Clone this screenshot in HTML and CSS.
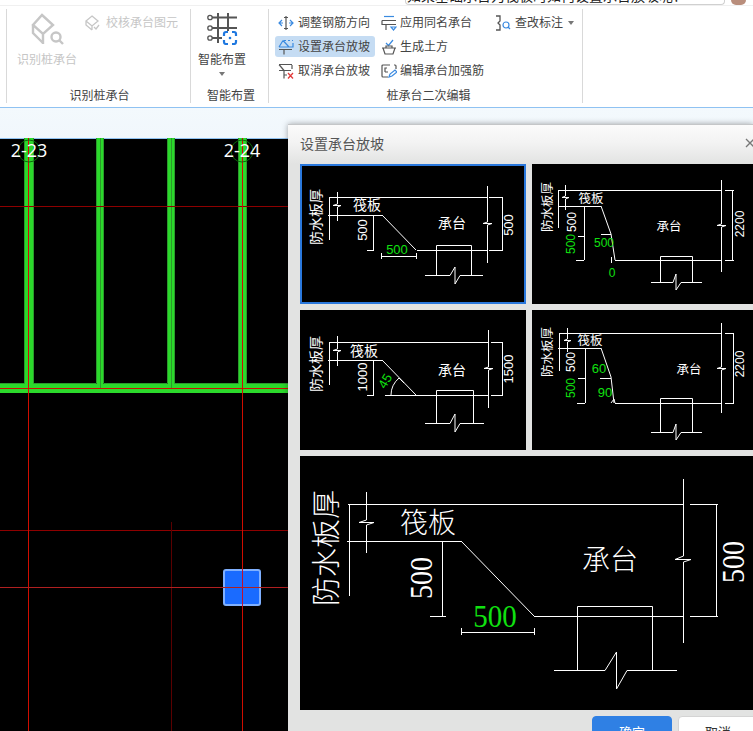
FILE: index.html
```html
<!DOCTYPE html>
<html lang="zh">
<head>
<meta charset="utf-8">
<title>设置承台放坡</title>
<link rel="stylesheet" href="styles.css">
</head>
<body>
<div class="topbar">
  <div class="search"><span class="search-text">如果基础承台为筏板时如何设置承台放坡呢？</span></div>
  <div class="avatar"></div>
</div>
<div class="ribbon">
  <section class="group g1">
    <div class="group-body">
      <div class="big disabled big-recog">
        <svg class="big-icon" viewBox="30 13 33 32"><path class="ic-dis" d="M41 15 L52 25 L42 34 L32 25 Z M32 25 V33 L42 43 M42 34 V44"/><circle class="ic-dis" cx="55" cy="37" r="4.5"/><path class="ic-dis" d="M58.5 40.5 L62 44"/></svg>
        <span>识别桩承台</span>
      </div>
      <div class="item disabled check-item">
        <svg class="icon" viewBox="0 0 16 16"><path class="ic-thin-dis" d="M7 1 L13 6 L7 11 L1 6 Z M1 6 V10 L7 15 M7 11 V15"/><path class="ic-thin-dis" d="M9 12 L11 14 L14 10"/></svg>
        <span>校核承台图元</span>
      </div>
    </div>
    <div class="group-label g1-label">识别桩承台</div>
  </section>
  <section class="group g2">
    <div class="group-body">
      <div class="big big-smart">
        <svg class="big-icon" viewBox="205 13 33 32">
          <path class="ic-dark" d="M211 17.500 H236 M211 28 H236 M211 38 H221 M217 13 V43 M227 13 V31"/>
          <circle class="ic-dark-thin" cx="209" cy="17.500" r="2.200"/><circle class="ic-dark-thin" cx="209" cy="28" r="2.200"/><circle class="ic-dark-thin" cx="209" cy="38" r="2.200"/>
          <path class="ic-blue" d="M223 36 V34 Q223 32 225 32 H227 M231 32 H233 Q235 32 235 34 V36 M235 40 V42 Q235 44 233 44 H231 M227 44 H225 Q223 44 223 42 V40"/>
          <circle class="ic-blue-dot" cx="229" cy="38" r="1.300"/>
        </svg>
        <span>智能布置</span>
        <i class="caret"></i>
      </div>
    </div>
    <div class="group-label g2-label">智能布置</div>
  </section>
  <section class="group g3">
    <div class="group-body cols">
      <div class="col col-a">
        <div class="item">
          <svg class="icon" viewBox="0 0 16 16"><path class="ic-gray" d="M8 1 V15 M6 2.500 H10 M6 13.500 H10"/><path class="ic-b" d="M4 5 L1 8 L4 11 M1 8 H5 M12 5 L15 8 L12 11 M15 8 H11"/></svg>
          <span>调整钢筋方向</span>
        </div>
        <div class="item active">
          <svg class="icon" viewBox="0 0 16 16"><path class="ic-b" d="M6 1.500 H8 M10 1.500 H12 M14 1.500 H15 M1 8 L5 1.500 M1 8 H15 V4 M5 1.500 L11 8"/><path class="ic-gray" d="M1 10.500 H14 M6 10.500 V15.500"/></svg>
          <span>设置承台放坡</span>
        </div>
        <div class="item">
          <svg class="icon" viewBox="0 0 16 16"><path class="ic-gray" d="M1 1.500 H14 M1 1.500 L6 7.500 M1 7.500 H13 M14 2 V6 M6 8 V15.500 M6 12 H9"/><path class="ic-r" d="M10 10 L15 15.500 M15 10 L10 15.500"/></svg>
          <span>取消承台放坡</span>
        </div>
      </div>
      <div class="col col-b">
        <div class="item">
          <svg class="icon" viewBox="0 0 16 16"><path class="ic-b" d="M3 1.500 H13"/><path class="ic-gray" d="M1 5.500 H15 M1 5.500 V9.500 H15 M5 9.500 V15"/><path class="ic-b" d="M10 12 H15 L12.500 15 Z"/></svg>
          <span>应用同名承台</span>
        </div>
        <div class="item">
          <svg class="icon" viewBox="0 0 16 16"><path class="ic-b" d="M5 4 L7.500 6.500 L12 1"/><path class="ic-gray" d="M1 9 H15 M2 9 L4 15 H12 L14 9 M5 9 V7 H11 V9"/></svg>
          <span>生成土方</span>
        </div>
        <div class="item">
          <svg class="icon" viewBox="0 0 16 16"><path class="ic-gray" d="M9 2 H2 Q1 2 1 3 V13 Q1 14 2 14 H7 M13 2 H14 Q15 2 15 3 V6 M4 9 V5 H6 M4 9 H7"/><path class="ic-b" d="M8 14 L9 11 L14 7 L16 9 L11 13 Z"/></svg>
          <span>编辑承台加强筋</span>
        </div>
      </div>
      <div class="col col-c">
        <div class="item">
          <svg class="icon" viewBox="0 0 16 16"><path class="ic-dark-thin" d="M1 1 H5 V6 L3 8 L5 10 V15 H1"/><circle class="ic-b" cx="11" cy="10" r="3"/><path class="ic-b" d="M13 12 L15 14"/></svg>
          <span>查改标注</span>
          <i class="caret caret-inline"></i>
        </div>
      </div>
    </div>
    <div class="group-label g3-label">桩承台二次编辑</div>
  </section>
</div>
<div class="band"></div>
<div class="canvas">
  <svg class="canvas-svg" viewBox="0 138 753 593">
    <g class="wall">
      <rect x="24" y="138" width="10" height="246"/>
      <rect x="97" y="138" width="6" height="246"/>
      <rect x="168" y="138" width="7" height="246"/>
      <rect x="238" y="138" width="9" height="246"/>
      <rect x="0" y="384" width="288" height="9"/>
    </g>
    <path class="wall-edge" d="M24.500 138 V383.500 H0 M33.500 138 V383.500 H96.500 V138 M100.500 138 V388 M103.500 138 V383.500 H167.500 V138 M171.500 138 V388 M174.500 138 V383.500 H238.500 V138 M246.500 138 V383.500 H288"/>
    <path class="line-dark" d="M0 206.500 H288 M0 530.500 H288"/>
    <path class="line-red" d="M28.500 138 V731 M242.500 138 V731 M0 388.500 H288"/>
    <path class="line-dim" d="M171.500 522 V731"/>
    <circle class="axis" cx="29" cy="151" r="11"/>
    <circle class="axis" cx="242" cy="151" r="11"/>
    <text class="axis-label" x="29" y="157">2-23</text>
    <text class="axis-label" x="242" y="157">2-24</text>
    <rect class="pick" x="224" y="570" width="36" height="35" rx="2"/>
    <path class="line-thin" d="M0 587.500 H288"/>
    <path class="line-soft" d="M242.500 569 V606"/>
  </svg>
</div>
<div class="dialog">
  <div class="dialog-title"><span>设置承台放坡</span><svg class="close" viewBox="0 0 10 10"><path d="M1 1 L9 9 M9 1 L1 9"/></svg></div>
  <div class="thumbs">
    <svg class="thumb selected" viewBox="300 164 226 140">
      <path class="cad" d="M329 197.500 H487 M489 197.500 H503 M502.500 197 V250 M417 250.500 H487 M489 250.500 H503 M329.500 197 V240 M328 215.500 H382 M373.500 215 V250 M367 250.500 H374 M381.500 253 V259 M381 256.500 H417 M416.500 253 V259 M436.500 275 V245.500 H471.500 V275 M425 275.500 H450 L455 267 V284 L460 275.500 H483 M337.500 192 V204 L333 205.500 H341 L337.500 207 V221 M487.500 186 V222 L483 223.500 H492 L487.500 225 V263"/>
      <path class="cad-thin" d="M382 215 L416 250"/>
      <text class="cn" x="367" y="204" font-size="14">筏板</text>
      <text class="cn" x="452" y="222" font-size="14">承台</text>
      <text class="cn" transform="rotate(-90 315 217)" x="315" y="217" font-size="14">防水板厚</text>
      <text class="num green" x="397" y="249" font-size="13">500</text>
      <text class="num" transform="rotate(-90 362 230)" x="362" y="230" font-size="13">500</text>
      <text class="num" transform="rotate(-90 508 225)" x="508" y="225" font-size="13">500</text>
    </svg>
    <svg class="thumb" viewBox="532 164 226 140">
      <path class="cad" d="M558 190.500 H721 M725 190.500 H734 M732.500 190 V260 M725 260.500 H734 M558.500 190 V228 M559 206.500 H601 M615 260.500 H721 M584.500 206 V260 M578 236.500 H584 M576 260.500 H584 M601 234.500 H611 M611.500 257 V263 M660.500 282 V256.500 H692.500 V282 M651 282.500 H673 L676 274 V290 L681 282.500 H702 M565.500 185 V196 L562 197.500 H569 L565.500 199 V210 M721.500 180 V224 L717 225.500 H726 L721.500 227 V272"/>
      <path class="cad-thin" d="M601 206 L611 234 L615 260"/>
      <text class="cn" x="591" y="197" font-size="12.500">筏板</text>
      <text class="cn" x="669" y="225" font-size="12.500">承台</text>
      <text class="cn" transform="rotate(-90 546 207)" x="546" y="207" font-size="12.500">防水板厚</text>
      <text class="num green" x="604" y="243" font-size="12">500</text>
      <text class="num green" x="612" y="273" font-size="12">0</text>
      <text class="num green" transform="rotate(-90 571 244)" x="571" y="244" font-size="12">500</text>
      <text class="num" transform="rotate(-90 572 222)" x="572" y="222" font-size="12">500</text>
      <text class="num" transform="rotate(-90 740 224)" x="740" y="224" font-size="12">2200</text>
    </svg>
    <svg class="thumb" viewBox="300 310 226 140">
      <path class="cad" d="M329 342.500 H488 M491 342.500 H503 M502.500 342 V395 M385 395.500 H488 M491 395.500 H503 M329.500 342 V385 M328 360.500 H382 M373.500 360 V395 M367 395.500 H374 M436.500 423 V390.500 H473.500 V423 M425 423.500 H450 L455 414 V432 L460 423.500 H484 M337.500 336 V349 L333 350.500 H341 L337.500 352 V366 M488.500 330 V367 L484 368.500 H493 L488.500 370 V408"/>
      <path class="cad-thin" d="M382 360 L416 395 M399 378 Q391 385 391 395 M399 378 L404 383"/>
      <text class="cn" x="364" y="350" font-size="14">筏板</text>
      <text class="cn" x="452" y="369" font-size="14">承台</text>
      <text class="cn" transform="rotate(-90 315 364)" x="315" y="364" font-size="14">防水板厚</text>
      <text class="num green" transform="rotate(-60 385 381)" x="385" y="381" font-size="13">45</text>
      <text class="num" transform="rotate(-90 362 377)" x="362" y="377" font-size="13">1000</text>
      <text class="num" transform="rotate(-90 508 369)" x="508" y="369" font-size="13">1500</text>
    </svg>
    <svg class="thumb" viewBox="532 310 226 140">
      <path class="cad" d="M559 333.500 H721 M725 333.500 H734 M733.500 333 V403 M725 403.500 H734 M615 403.500 H721 M559.500 333 V371 M558 348.500 H601 M585.500 348 V403 M578 378.500 H585 M577 403.500 H585 M600 378.500 H611 M660.500 432 V398.500 H692.500 V432 M660 403.500 H692 M651 432.500 H673 L676 424 V440 L681 432.500 H702 M567.500 328 V339 L564 340.500 H571 L567.500 342 V352 M721.500 323 V367 L717 368.500 H726 L721.500 370 V413 M611 403 L614 399 L615 403"/>
      <path class="cad-thin" d="M601 348 L611 377 L614 403"/>
      <text class="cn" x="590" y="339" font-size="12.500">筏板</text>
      <text class="cn" x="689" y="368" font-size="12.500">承台</text>
      <text class="cn" transform="rotate(-90 546 352)" x="546" y="352" font-size="12.500">防水板厚</text>
      <text class="num green" x="599" y="368" font-size="13">60</text>
      <text class="num green" x="605" y="392" font-size="13">90</text>
      <text class="num green" transform="rotate(-90 571 388)" x="571" y="388" font-size="12">500</text>
      <text class="num" transform="rotate(-90 571 362)" x="571" y="362" font-size="12">500</text>
      <text class="num" transform="rotate(-90 740 364)" x="740" y="364" font-size="12">2200</text>
    </svg>
  </div>
  <svg class="preview" viewBox="300 456 453 254">
    <path class="cad" d="M348 504.500 H683 M690 504.500 H718 M716.500 504 V616 M534 616.500 H683 M690 616.500 H718 M349.500 504 V596 M347 541.500 H461 M442.500 541 V616 M430 616.500 H446 M461.500 628 V635 M461 632.500 H534 M534.500 628 V635 M577.500 670 V606.500 H652.500 V670 M554 670.500 H605 L616.500 652 V689 L627 670.500 H677 M366.500 492 V520 L359 522.500 H374 L366.500 525 V553 M683.500 479 V556 L675 559.500 H691 L683.500 562 V643"/>
    <path class="cad-thin" d="M461 541 L534 616"/>
    <text class="big-cn" x="428" y="521" font-size="28">筏板</text>
    <text class="big-cn" x="610" y="558" font-size="28">承台</text>
    <text class="big-cn" transform="rotate(-90 324 548)" x="324" y="548" font-size="29">防水板厚</text>
    <text class="serif green" transform="translate(495 616) scale(1 1.120)" x="0" y="0" font-size="29">500</text>
    <text class="serif" transform="translate(421 578) rotate(-90) scale(1 1.150)" x="0" y="0" font-size="28">500</text>
    <text class="serif" transform="translate(733 562) rotate(-90) scale(1 1.150)" x="0" y="0" font-size="28">500</text>
  </svg>
  <div class="dialog-actions">
    <button class="btn btn-primary">确定</button>
    <button class="btn">取消</button>
  </div>
</div>
</body>
</html>
```
FILE: styles.css
```css
* { box-sizing: border-box; }
html, body { margin: 0; padding: 0; }
body {
  width: 753px;
  height: 731px;
  overflow: hidden;
  position: relative;
  background: #fff;
  font-family: "Noto Sans CJK SC", "Liberation Sans", sans-serif;
  font-size: 12px;
  color: #444;
}
.topbar {
  height: 6px;
  display: flex;
  justify-content: flex-end;
  gap: 6px;
  padding-right: 7px;
  border-bottom: 1px solid #f0f0f0;
}
.search {
  width: 320px;
  height: 5px;
  overflow: hidden;
  border: 1px solid #d0d0d0;
  border-top: 0;
  border-radius: 0 0 4px 4px;
  padding-left: 1px;
}
.search-text {
  display: block;
  margin-top: -14px;
  font-size: 14px;
  line-height: 18px;
  color: #222;
  white-space: nowrap;
}
.avatar {
  width: 15px;
  height: 5px;
  border-radius: 0 0 8px 8px;
  background: #b98e7c;
}
.ribbon {
  height: 101px;
  display: flex;
  padding: 3px 0 0 6px;
}
.group {
  height: 94px;
  display: flex;
  flex-direction: column;
  border-left: 1px solid #d9d9d9;
}
.g1 { width: 184px; }
.g2 { width: 78px; }
.g3 { width: 315px; border-right: 1px solid #d9d9d9; }
.group-body { flex: 1; display: flex; }
.group-label {
  height: 16px;
  line-height: 16px;
  text-align: center;
  color: #444;
}
.g1-label { padding-left: 2px; }
.g2-label { padding-left: 3px; }
.g3-label { padding-left: 6px; }
.big {
  display: flex;
  flex-direction: column;
  align-items: center;
  flex: none;
}
.big span { margin-top: 6px; line-height: 16px; }
.big-icon { width: 33px; height: 32px; margin-top: 4px; display: block; }
.big-recog { width: 60px; margin-left: 10px; }
.big-smart { width: 48px; margin-left: 7px; }
.disabled { color: #c6c6c6; }
.item {
  display: flex;
  align-items: center;
  height: 21px;
  gap: 5px;
  white-space: nowrap;
}
.item span { margin-bottom: 2px; }
.icon { width: 16px; height: 16px; flex: none; }
.check-item { margin: 3px 0 0 8px; height: 21px; }
.cols { padding-left: 6px; }
.col { display: flex; flex-direction: column; gap: 3px; padding-top: 3px; }
.col-a { width: 100px; }
.col-a .item { padding-left: 3px; border-radius: 3px; gap: 4px; }
.col-b { width: 114px; margin-left: 6px; }
.col-b .item { gap: 3px; }
.col-c .item { gap: 4px; }
.active { background: #c5dcf3; }
.caret {
  display: block;
  width: 0;
  height: 0;
  margin-top: 5px;
  border: 3px solid transparent;
  border-top: 4px solid #777;
  border-bottom: 0;
}
.caret-inline { margin: 0 0 0 1px; }
.ic-dis { fill: none; stroke: #c6c6c6; stroke-width: 2.4; }
.ic-thin-dis { fill: none; stroke: #c6c6c6; stroke-width: 1.300; }
.ic-dark { fill: none; stroke: #555; stroke-width: 2; }
.ic-dark-thin { fill: none; stroke: #555; stroke-width: 1.300; }
.ic-blue { fill: none; stroke: #1f78e0; stroke-width: 2.200; }
.ic-blue-dot { fill: #1f78e0; }
.ic-gray { fill: none; stroke: #555; stroke-width: 1.200; }
.ic-b { fill: none; stroke: #3a8ae0; stroke-width: 1.200; }
.ic-r { fill: none; stroke: #e23a3a; stroke-width: 1.300; }
.band {
  height: 31px;
  border-top: 1px solid #8fc2f2;
  background: linear-gradient(#f3f9fd, #f1f7fc);
}
.canvas {
  height: 593px;
  background: #000;
  border-top: 1px solid #8fc2f2;
}
.canvas-svg { display: block; width: 753px; height: 593px; margin-top: -1px; }
.wall rect { fill: #2bd92b; }
.wall-edge { fill: none; stroke: #2c9a2c; stroke-width: 1; }
.line-dark { fill: none; stroke: #8e0000; stroke-width: 1; }
.line-red { fill: none; stroke: #cf0d00; stroke-width: 1; }
.line-dim { fill: none; stroke: #5a0000; stroke-width: 1; }
.line-thin { fill: none; stroke: #b02020; stroke-width: 1; }
.line-soft { fill: none; stroke: #c01030; stroke-width: 1; }
.axis { fill: none; stroke: #0c6a0c; stroke-width: 1; }
.axis-label {
  fill: #fff;
  font-family: "Open Sans", sans-serif;
  font-size: 18px;
  text-anchor: middle;
}
.pick { fill: #1a6bff; stroke: #7fb0ff; stroke-width: 2; }
.dialog {
  position: absolute;
  left: 288px;
  top: 124px;
  width: 465px;
  height: 607px;
  overflow: hidden;
  background: #e2e3e2;
  border-top: 1px solid #c4c6c8;
  box-shadow: 0 0 6px rgba(0, 0, 0, .35);
}
.dialog-title {
  height: 39px;
  display: flex;
  align-items: center;
  justify-content: space-between;
  padding: 0 0 3px 12px;
  font-size: 14px;
  color: #555;
  background: linear-gradient(#fbfbfb, #f3f3f3 45%, #e2e3e2);
}
.close { width: 10px; height: 10px; margin-right: -2px; flex: none; }
.close path { fill: none; stroke: #777; stroke-width: 1.300; }
.thumbs {
  display: grid;
  grid-template-columns: 226px 226px;
  grid-template-rows: 140px 140px;
  gap: 6px;
  margin-left: 12px;
}
.thumb { display: block; width: 226px; height: 140px; background: #000; }
.selected { outline: 2px solid #2a78dc; outline-offset: -2px; }
.preview { display: block; width: 453px; height: 254px; margin: 6px 0 0 12px; background: #000; }
.cad { fill: none; stroke: #fff; stroke-width: 1; }
.cad-thin { fill: none; stroke: #fff; stroke-width: 1; }
.cn, .big-cn, .num, .serif {
  fill: #fff;
  text-anchor: middle;
  dominant-baseline: central;
}
.cn, .big-cn { font-family: "Noto Sans CJK SC", sans-serif; }
.big-cn { font-weight: 300; }
.num { font-family: "Liberation Sans", sans-serif; }
.serif { font-family: "Liberation Serif", serif; }
.cn.green, .num.green, .serif.green { fill: #10e010; }
.dialog-actions {
  display: flex;
  gap: 6px;
  margin-top: 6px;
  padding-left: 304px;
}
.btn {
  flex: none;
  width: 80px;
  height: 30px;
  padding: 0;
  font: 13px "Noto Sans CJK SC", sans-serif;
  color: #333;
  background: #fff;
  border: 1px solid #d4d4d4;
  border-radius: 4px;
}
.btn-primary { color: #fff; background: #2f80e4; border-color: #2f80e4; }
```
